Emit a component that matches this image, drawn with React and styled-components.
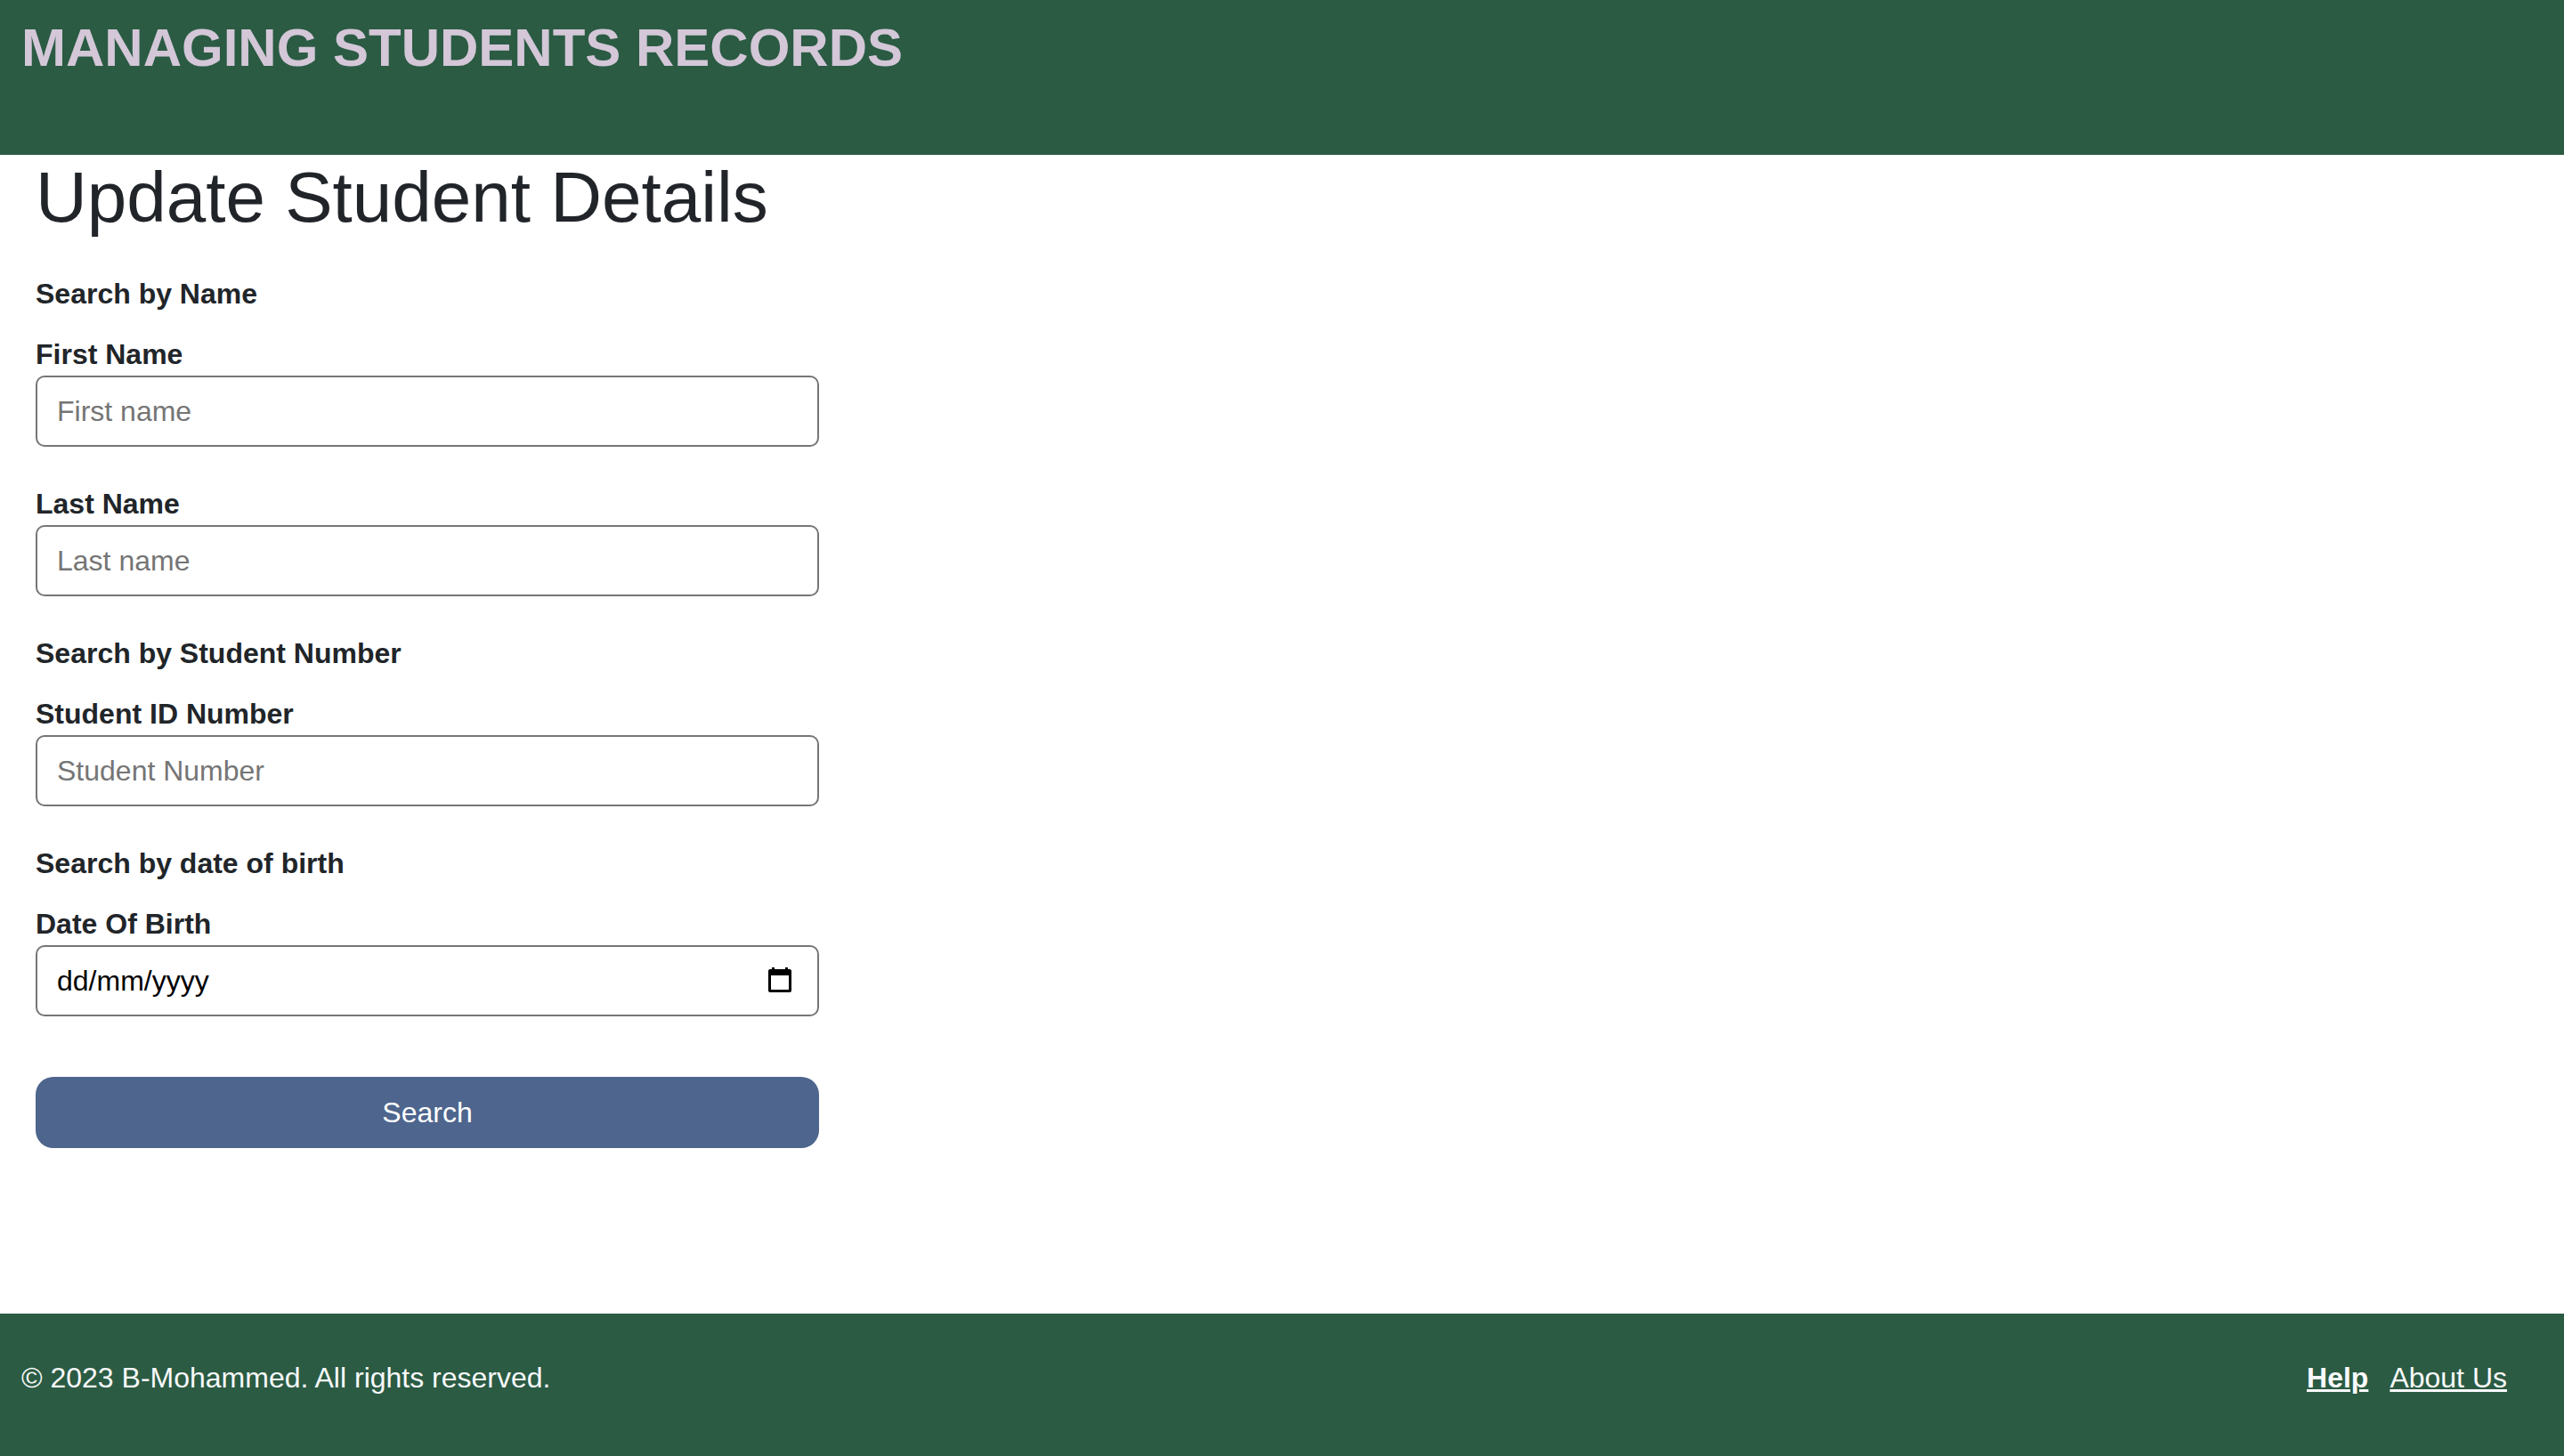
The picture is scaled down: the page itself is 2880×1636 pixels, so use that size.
import React from "react";
import styled, { createGlobalStyle } from "styled-components";

const GlobalStyle = createGlobalStyle`
  *, *::before, *::after { box-sizing: border-box; }
  body {
    margin: 0;
    background: #ffffff;
    color: #212529;
    font-family: "Liberation Sans", Arial, Helvetica, sans-serif;
    font-size: 32px;
    line-height: 48px;
  }
`;

const Page = styled.div`
  display: flex;
  flex-direction: column;
  min-height: 100vh;
`;

const Header = styled.header`
  padding: 18px 24px 84px;
  background: #2b5b43;
`;

const Brand = styled.h1`
  margin: 0;
  color: #d3c7d8;
  font-size: 60px;
  font-weight: 700;
  line-height: 72px;
`;

const Main = styled.main`
  flex: 1;
  padding: 0 40px;
`;

const PageTitle = styled.h2`
  margin: 0 0 36px;
  font-size: 80px;
  font-weight: 400;
  line-height: 96px;
`;

const SearchForm = styled.form`
  display: flex;
  flex-direction: column;
  gap: 40px;
  width: 100%;
  max-width: 880px;
`;

const Group = styled.fieldset`
  display: flex;
  flex-direction: column;
  gap: 40px;
  min-width: 0;
  margin: 0;
  padding: 0;
  border: 0;
`;

const GroupTitle = styled.legend`
  margin-bottom: 20px;
  padding: 0;
  font-weight: 700;
`;

const Field = styled.div`
  display: flex;
  flex-direction: column;
`;

const Label = styled.label`
  font-weight: 700;
`;

const Control = styled.div`
  display: flex;
  align-items: center;
  height: 80px;
  padding: 0 22px;
  border: 2px solid #767676;
  border-radius: 10px;
  background: #ffffff;
`;

const TextInput = styled.input`
  flex: 1;
  min-width: 0;
  height: 100%;
  padding: 0;
  border: 0;
  outline: 0;
  background: transparent;
  color: #000000;
  font: inherit;

  &::placeholder {
    color: ${({ $solid }) => ($solid ? "#000000" : "#757575")};
    opacity: 1;
  }
`;

const PickerButton = styled.button`
  display: flex;
  padding: 4px 7px 6px;
  border: 0;
  background: transparent;
  color: #000000;
  cursor: pointer;
`;

const SubmitButton = styled.button`
  height: 80px;
  margin-top: 28px;
  border: 0;
  border-radius: 20px;
  background: #4e658d;
  color: #ffffff;
  font: inherit;
  cursor: pointer;
`;

const Footer = styled.footer`
  display: flex;
  align-items: center;
  justify-content: space-between;
  height: 160px;
  padding: 0 64px 16px 24px;
  background: #2b5b43;
  color: #f8f9fa;
`;

const FooterNav = styled.nav`
  display: flex;
  gap: 24px;
`;

const FooterLink = styled.a`
  color: inherit;
  font-weight: ${({ $strong }) => ($strong ? 700 : 400)};
  text-decoration-thickness: 3px;
`;

function CalendarIcon() {
  return (
    <svg width="26" height="28" viewBox="0 0 26 28" fill="currentColor" aria-hidden="true">
      <path
        fillRule="evenodd"
        d="M4 0h3v2h12V0h3v2h2a2 2 0 0 1 2 2v22a2 2 0 0 1-2 2H2a2 2 0 0 1-2-2V4a2 2 0 0 1 2-2h2zM3 9v16h20V9z"
      />
    </svg>
  );
}

function TextField({ id, label, placeholder }) {
  return (
    <Field>
      <Label htmlFor={id}>{label}</Label>
      <Control>
        <TextInput id={id} name={id} type="text" placeholder={placeholder} />
      </Control>
    </Field>
  );
}

function DateField({ id, label }) {
  return (
    <Field>
      <Label htmlFor={id}>{label}</Label>
      <Control>
        <TextInput id={id} name={id} type="text" inputMode="numeric" placeholder="dd/mm/yyyy" $solid />
        <PickerButton type="button" aria-label="Show date picker">
          <CalendarIcon />
        </PickerButton>
      </Control>
    </Field>
  );
}

export default function App() {
  return (
    <>
      <GlobalStyle />
      <Page>
        <Header>
          <Brand>MANAGING STUDENTS RECORDS</Brand>
        </Header>
        <Main>
          <PageTitle>Update Student Details</PageTitle>
          <SearchForm onSubmit={(event) => event.preventDefault()}>
            <Group>
              <GroupTitle>Search by Name</GroupTitle>
              <TextField id="firstName" label="First Name" placeholder="First name" />
              <TextField id="lastName" label="Last Name" placeholder="Last name" />
            </Group>
            <Group>
              <GroupTitle>Search by Student Number</GroupTitle>
              <TextField id="studentNumber" label="Student ID Number" placeholder="Student Number" />
            </Group>
            <Group>
              <GroupTitle>Search by date of birth</GroupTitle>
              <DateField id="dateOfBirth" label="Date Of Birth" />
            </Group>
            <SubmitButton type="submit">Search</SubmitButton>
          </SearchForm>
        </Main>
        <Footer>
          <span>© 2023 B-Mohammed. All rights reserved.</span>
          <FooterNav>
            <FooterLink href="#help" $strong>Help</FooterLink>
            <FooterLink href="#about">About Us</FooterLink>
          </FooterNav>
        </Footer>
      </Page>
    </>
  );
}
